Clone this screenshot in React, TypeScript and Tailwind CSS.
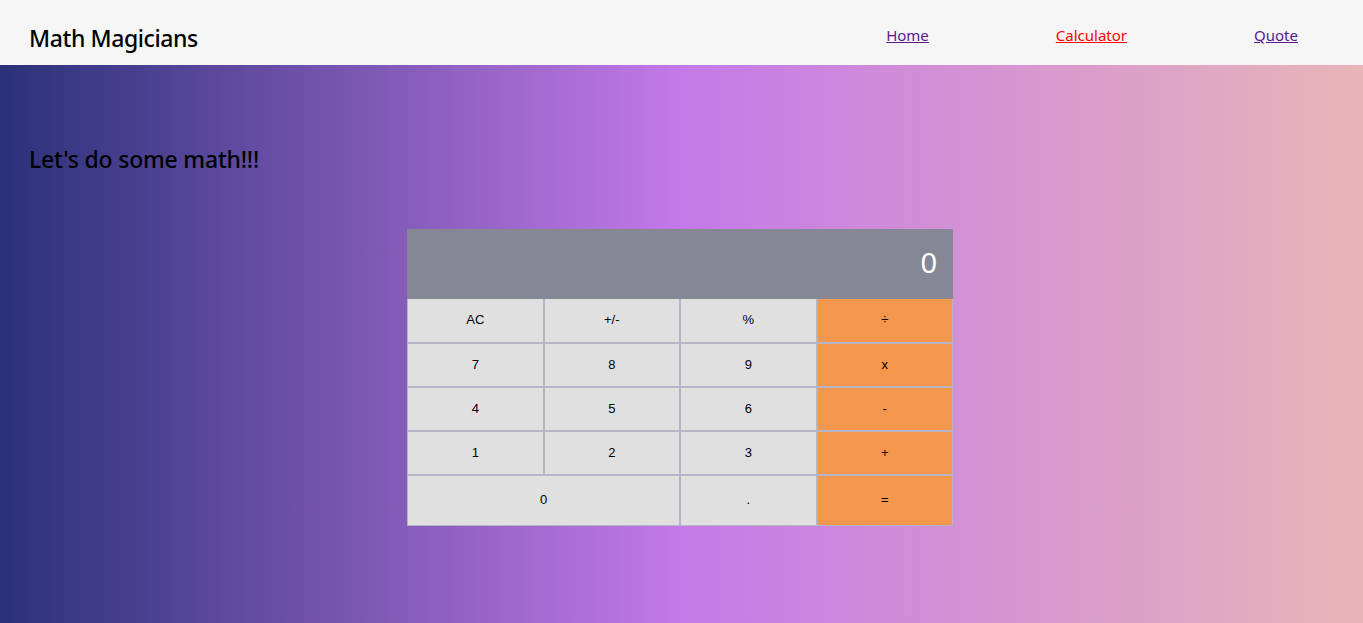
import React from "react";

const rows: { label: string; op?: boolean; span?: number }[][] = [
  [{ label: "AC" }, { label: "+/-" }, { label: "%" }, { label: "÷", op: true }],
  [{ label: "7" }, { label: "8" }, { label: "9" }, { label: "x", op: true }],
  [{ label: "4" }, { label: "5" }, { label: "6" }, { label: "-", op: true }],
  [{ label: "1" }, { label: "2" }, { label: "3" }, { label: "+", op: true }],
  [{ label: "0", span: 2 }, { label: "." }, { label: "=", op: true }],
];

const heights = ["h-[43px]", "h-[42px]", "h-[42px]", "h-[42px]", "h-[49px]"];

export default function App() {
  return (
    <div
      className="min-h-screen flex flex-col"
      style={{ fontFamily: '"Noto Sans", "Open Sans", sans-serif' }}
    >
      <header className="h-[65px] bg-[#f5f5f5] flex items-center justify-between pl-[29px] pr-[65px] shrink-0">
        <h1 className="text-[23px] font-medium text-black mt-[12px] tracking-[-0.4px]">Math Magicians</h1>
        <nav className="flex items-center gap-[127px] text-[15px] mt-[6px]">
          <a href="#" className="underline text-[#551a8b]">Home</a>
          <a href="#" className="underline text-[#ff0000]">Calculator</a>
          <a href="#" className="underline text-[#551a8b]">Quote</a>
        </nav>
      </header>
      <main className="flex-1 bg-[linear-gradient(90deg,#2a3179_0%,#c479e8_50%,#e9b5b8_100%)] pb-[98px]">
        <h2 className="pl-[29px] pt-[77px] text-[23px] font-medium text-black tracking-[-0.2px]">Let's do some math!!!</h2>
        <div className="mt-[52px] ml-[407px] w-[546px]">
          <div
            className="h-[70px] bg-[#868795] flex items-center justify-end pr-[16px] text-white text-[29px]"
            style={{ fontFamily: '"Liberation Sans", Arial, sans-serif' }}
          >
            0
          </div>
          <div
            className="grid grid-cols-4 bg-[#b6b5c8] border border-[#b6b5c8] border-t-0 gap-[2px]"
            style={{ fontFamily: '"Liberation Sans", Arial, sans-serif' }}
          >
            {rows.map((row, ri) =>
              row.map((b, bi) => (
                <button
                  key={`${ri}-${bi}`}
                  className={`${b.span === 2 ? "col-span-2" : ""} ${heights[ri]} ${
                    b.op ? "bg-[#f2974b]" : "bg-[#e0e0e0]"
                  } text-[13px] text-black flex items-center justify-center`}
                >
                  {b.label}
                </button>
              ))
            )}
          </div>
        </div>
      </main>
    </div>
  );
}
